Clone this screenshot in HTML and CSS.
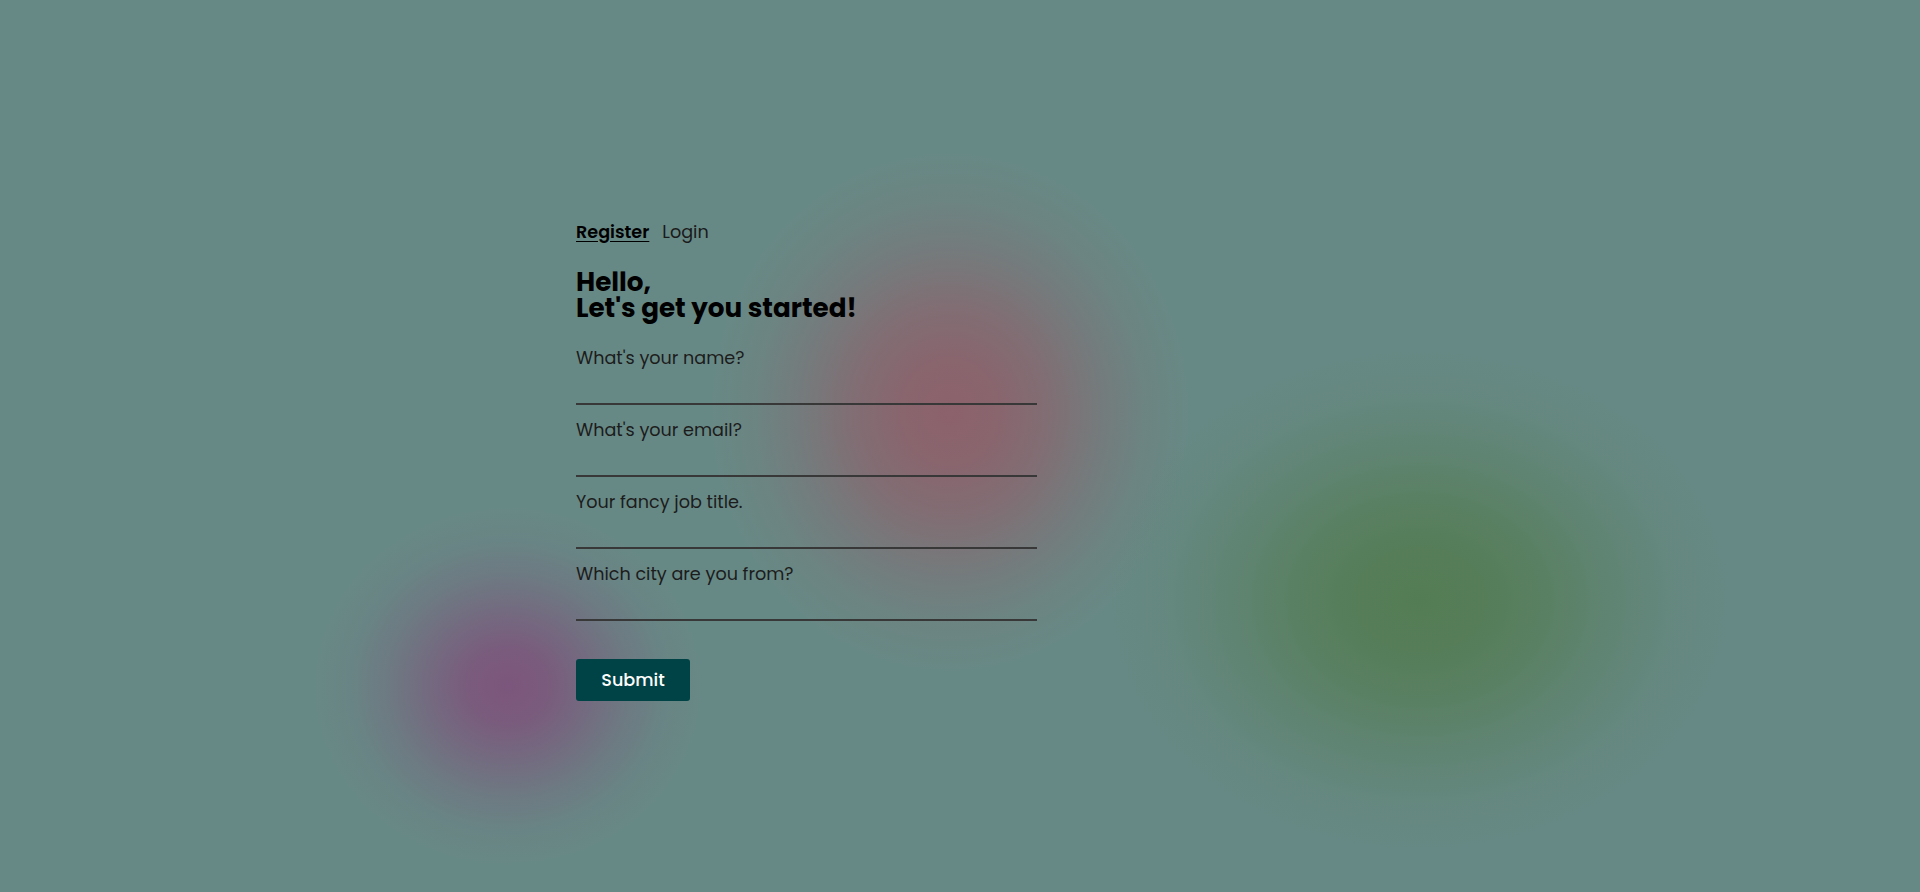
FILE: index.html
```html
<!DOCTYPE html>
<html lang="en">
<head>
<meta charset="utf-8">
<title>Register</title>
<link rel="stylesheet" href="styles.css">
</head>
<body>
<main class="container">
  <nav class="tabs">
    <a class="tab active" href="#">Register</a>
    <a class="tab" href="#">Login</a>
  </nav>
  <h1 class="title">Hello,<br>Let's get you started!</h1>
  <form class="form">
    <div class="field">
      <label for="name">What's your name?</label>
      <input id="name" type="text">
    </div>
    <div class="field">
      <label for="email">What's your email?</label>
      <input id="email" type="email">
    </div>
    <div class="field">
      <label for="job">Your fancy job title.</label>
      <input id="job" type="text">
    </div>
    <div class="field">
      <label for="city">Which city are you from?</label>
      <input id="city" type="text">
    </div>
    <button class="submit" type="button">Submit</button>
  </form>
</main>
</body>
</html>
```

FILE: styles.css
```css
html, body {
  margin: 0;
  height: 100%;
}

body {
  font-family: "Poppins", "Open Sans", "Noto Sans", sans-serif;
  color: #111;
  background-color: #678985;
  background-image:
    radial-gradient(ellipse 240px 260px at 950px 412px, rgba(140, 98, 108, 1) 0%, rgba(140, 98, 108, 0.92) 20%, rgba(140, 98, 108, 0.7) 40%, rgba(140, 98, 108, 0.4) 60%, rgba(140, 98, 108, 0.14) 80%, rgba(140, 98, 108, 0) 100%),
    radial-gradient(ellipse 195px 180px at 508px 686px, rgba(124, 86, 124, 1) 0%, rgba(124, 86, 124, 0.9) 20%, rgba(124, 86, 124, 0.62) 40%, rgba(124, 86, 124, 0.32) 60%, rgba(124, 86, 124, 0.1) 80%, rgba(124, 86, 124, 0) 100%),
    radial-gradient(ellipse 310px 250px at 1420px 600px, rgba(84, 124, 84, 1) 0%, rgba(84, 124, 84, 0.92) 20%, rgba(84, 124, 84, 0.7) 40%, rgba(84, 124, 84, 0.4) 60%, rgba(84, 124, 84, 0.14) 80%, rgba(84, 124, 84, 0) 100%);
  background-repeat: no-repeat;
  overflow: hidden;
}

.container {
  width: 768px;
  margin: 0 auto;
  padding-top: 220px;
  box-sizing: border-box;
}

.tabs {
  display: flex;
  gap: 13px;
  font-size: 17.6px;
  line-height: 24px;
}

.tab {
  color: #1a1a1a;
  text-decoration: none;
}

.tab.active {
  font-weight: 600;
  color: #000;
  text-decoration: underline;
  text-underline-offset: 3px;
}

.title {
  margin: 25px 0 25px;
  font-size: 26.2px;
  line-height: 26px;
  font-weight: 700;
  color: #000;
}

.form {
  width: 60%;
  display: flex;
  flex-direction: column;
  gap: 13px;
}

.field {
  display: flex;
  flex-direction: column;
}

.field label {
  font-size: 17.6px;
  line-height: 24px;
  color: #1c1c1c;
}

.field input {
  height: 35px;
  box-sizing: border-box;
  border: none;
  border-bottom: 2px solid #383838;
  background: transparent;
  padding: 0;
  font: inherit;
  outline: none;
}

.submit {
  align-self: flex-start;
  margin-top: 25px;
  width: 114px;
  height: 42px;
  border: none;
  border-radius: 3px;
  background: #004346;
  color: #fff;
  font-family: inherit;
  font-size: 17.6px;
  font-weight: 500;
  cursor: pointer;
}
```
